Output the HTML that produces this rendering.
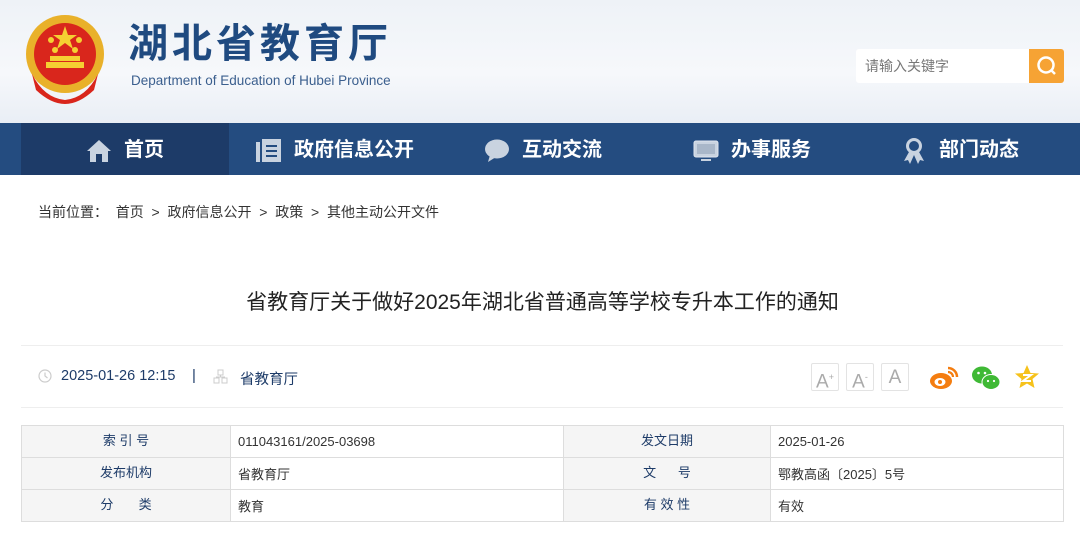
<!DOCTYPE html>
<html><head><meta charset="utf-8"><style>
*{margin:0;padding:0;box-sizing:border-box}
body{width:1080px;height:535px;overflow:hidden;background:#fff;font-family:"Liberation Sans","Noto Sans CJK SC",sans-serif;position:relative;color:#333}
.hd{position:absolute;left:0;top:0;width:1080px;height:123px;background:linear-gradient(180deg,#eef2f7 0%,#f6f8fb 60%,#e9eef5 100%)}
.abs{position:absolute}
.nav{position:absolute;left:0;top:123px;width:1080px;height:52px;background:#244c80}
.nav .act{position:absolute;left:21px;top:0;width:208px;height:52px;background:#1d3b68}
.ni{position:absolute;top:0;height:52px;line-height:54px;color:#fff;font-weight:bold;font-size:20px}
td{border:1px solid #ddd;font-size:13px;height:32px}
td.l{background:#f5f5f5;text-align:center;color:#1d3b68;vertical-align:top;padding-top:4px}
td.v{padding-left:7px;color:#333}
.fb{position:absolute;top:363px;width:28px;height:28px;border:1px solid #e3e3e3;border-radius:2px;color:#aaa;font-size:19px;text-align:center;line-height:27px}
</style></head><body>
<div class="hd"></div>
<svg class="abs" style="left:24px;top:14px" width="86" height="90" viewBox="0 0 86 90">
<circle cx="41" cy="40" r="39" fill="#e9b12a"/><circle cx="41" cy="40" r="31" fill="#d9261c"/>
<polygon points="41,12 44,21 53,21 46,26 49,35 41,29 33,35 36,26 29,21 38,21" fill="#f5d032"/>
<circle cx="27" cy="26" r="3" fill="#f5d032"/><circle cx="55" cy="26" r="3" fill="#f5d032"/><circle cx="31" cy="36" r="3" fill="#f5d032"/><circle cx="51" cy="36" r="3" fill="#f5d032"/>
<rect x="22" y="48" width="38" height="6" fill="#f5d032"/><rect x="26" y="42" width="30" height="5" fill="#f5d032"/>
<path d="M8 60 Q20 84 41 86 Q62 84 74 60 L70 76 Q55 90 41 90 Q27 90 12 76Z" fill="#d9261c"/>
</svg>
<div class="abs" style="left:128px;top:18px;font-size:40px;font-weight:bold;color:#1f4a80;letter-spacing:4px;line-height:52px">湖北省教育厅</div>
<div class="abs" style="left:131px;top:73px;font-size:13.5px;color:#3b5f8e">Department of Education of Hubei Province</div>
<div class="abs" style="left:856px;top:49px;width:174px;height:34px;background:#fff;border-radius:3px 0 0 3px;font-size:14px;color:#777;line-height:34px;padding-left:9px">请输入关键字</div>
<div class="abs" style="left:1029px;top:49px;width:35px;height:34px;background:#f6a334;border-radius:0 3px 3px 0"><svg width="35" height="34"><circle cx="17" cy="16" r="7.5" fill="none" stroke="#fff" stroke-width="2.5"/><line x1="22.5" y1="21.5" x2="26" y2="25" stroke="#fff" stroke-width="2.5"/></svg></div>
<div class="nav"><div class="act"></div>
<svg class="abs" style="left:86px;top:16px" width="26" height="24"><path d="M13 1 L25 12 L22 12 L22 23 L16 23 L16 15 L10 15 L10 23 L4 23 L4 12 L1 12Z" fill="#c9d3e0"/></svg>
<div class="ni" style="left:124px">首页</div>
<svg class="abs" style="left:256px;top:16px" width="26" height="24"><rect x="0" y="3" width="4" height="20" fill="#c9d3e0"/><rect x="6" y="0" width="19" height="23" fill="#c9d3e0"/><rect x="10" y="6" width="11" height="2" fill="#244c80"/><rect x="10" y="11" width="11" height="2" fill="#244c80"/><rect x="10" y="16" width="11" height="2" fill="#244c80"/></svg>
<div class="ni" style="left:294px">政府信息公开</div>
<svg class="abs" style="left:484px;top:16px" width="26" height="24"><ellipse cx="13" cy="10" rx="12" ry="9.5" fill="#c9d3e0"/><path d="M6 16 L4 23 L12 18Z" fill="#c9d3e0"/></svg>
<div class="ni" style="left:522px">互动交流</div>
<svg class="abs" style="left:693px;top:17px" width="26" height="22"><rect x="1" y="1" width="24" height="16" rx="2" fill="#c9d3e0" stroke="#dfe5ee" stroke-width="1"/><rect x="4" y="4" width="18" height="10" fill="#a9b7c9"/><rect x="8" y="19" width="10" height="2" fill="#c9d3e0"/></svg>
<div class="ni" style="left:731px">办事服务</div>
<svg class="abs" style="left:903px;top:15px" width="22" height="26"><circle cx="11" cy="8" r="6.5" fill="none" stroke="#c9d3e0" stroke-width="3"/><path d="M6 14 L1 23 L5 22 L7 26 L11 17 L15 26 L17 22 L21 23 L16 14Z" fill="#c9d3e0"/></svg>
<div class="ni" style="left:939px">部门动态</div>
</div>
<div class="abs" style="left:38px;top:202px;font-size:14px;color:#333">当前位置：&nbsp;&nbsp;首页 &nbsp;&gt;&nbsp; 政府信息公开 &nbsp;&gt;&nbsp; 政策 &nbsp;&gt;&nbsp; 其他主动公开文件</div>
<div class="abs" style="left:0;top:286px;width:1085px;text-align:center;font-size:21px;color:#222">省教育厅关于做好2025年湖北省普通高等学校专升本工作的通知</div>
<div class="abs" style="left:21px;top:345px;width:1042px;height:1px;background:#eee"></div>
<div class="abs" style="left:21px;top:407px;width:1042px;height:1px;background:#eee"></div>
<svg class="abs" style="left:38px;top:369px" width="14" height="14"><circle cx="7" cy="7" r="6" fill="none" stroke="#ccc" stroke-width="1.2"/><path d="M7 3.5 V7 L9.5 9" fill="none" stroke="#ccc" stroke-width="1.2"/></svg>
<div class="abs" style="left:61px;top:368px;font-size:14.5px;color:#1d3b68">2025-01-26 12:15</div>
<div class="abs" style="left:192px;top:367px;font-size:15px;color:#1d3b68">|</div>
<svg class="abs" style="left:213px;top:369px" width="15" height="15"><rect x="5" y="1" width="5" height="5" fill="none" stroke="#ccc"/><rect x="1" y="9" width="5" height="5" fill="none" stroke="#ccc"/><rect x="9" y="9" width="5" height="5" fill="none" stroke="#ccc"/><path d="M7.5 6 V8 M3.5 9 V8 H11.5 V9" stroke="#ccc" fill="none"/></svg>
<div class="abs" style="left:240px;top:368px;font-size:14.5px;color:#1d3b68">省教育厅</div>
<div class="fb" style="left:811px">A<sup style="font-size:9px">+</sup></div>
<div class="fb" style="left:846px">A<sup style="font-size:9px">-</sup></div>
<div class="fb" style="left:881px">A</div>
<svg class="abs" style="left:929px;top:364px" width="30" height="26"><ellipse cx="12" cy="17" rx="11" ry="8" fill="#f47d10"/><ellipse cx="11" cy="18" rx="5.5" ry="4" fill="#fff"/><circle cx="11" cy="18" r="2" fill="#f47d10"/><path d="M19 4 A9 9 0 0 1 28 13" stroke="#f47d10" stroke-width="2.5" fill="none"/><path d="M19 8 A5 5 0 0 1 24 13" stroke="#f47d10" stroke-width="2.2" fill="none"/></svg>
<svg class="abs" style="left:971px;top:365px" width="30" height="26"><ellipse cx="11" cy="10" rx="10" ry="8.5" fill="#3fb935"/><ellipse cx="20" cy="17" rx="9" ry="7.5" fill="#3fb935" stroke="#fff" stroke-width="1"/><circle cx="7.5" cy="8" r="1.3" fill="#fff"/><circle cx="14" cy="8" r="1.3" fill="#fff"/><circle cx="17" cy="16" r="1.1" fill="#fff"/><circle cx="23" cy="16" r="1.1" fill="#fff"/></svg>
<svg class="abs" style="left:1014px;top:364px" width="26" height="26"><polygon points="13,1 16.5,9 25,9.5 18.5,15 20.5,24 13,19.5 5.5,24 7.5,15 1,9.5 9.5,9" fill="#f6c21b"/><path d="M9 11 H17 L9 17 H17" stroke="#fff" stroke-width="2" fill="none"/></svg>
<table class="abs" style="left:21px;top:425px;width:1043px;border-collapse:collapse">
<tr><td class="l" style="width:209px">索 引 号</td><td class="v" style="width:333px">011043161/2025-03698</td><td class="l" style="width:207px">发文日期</td><td class="v">2025-01-26</td></tr>
<tr><td class="l">发布机构</td><td class="v">省教育厅</td><td class="l">文&nbsp;&nbsp;&nbsp;&nbsp;&nbsp; 号</td><td class="v">鄂教高函〔2025〕5号</td></tr>
<tr><td class="l">分&nbsp;&nbsp;&nbsp;&nbsp;&nbsp;&nbsp; 类</td><td class="v">教育</td><td class="l">有 效 性</td><td class="v">有效</td></tr>
</table>
</body></html>
